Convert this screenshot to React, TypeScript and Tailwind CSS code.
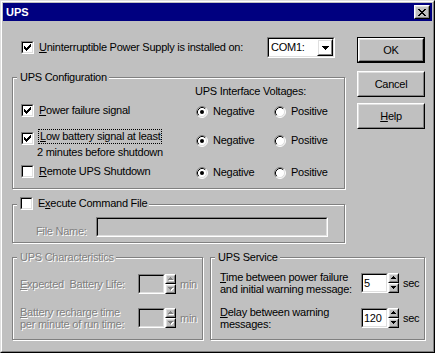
import React from 'react';

const dis = 'text-[#808080] [text-shadow:1px_1px_0_#ffffff]';

type Box = { className?: string; children?: React.ReactNode };

const Raised = ({ className = '', children }: Box) => (
  <div className={`border border-t-white border-l-white border-b-black border-r-black ${className}`}>
    <div className="w-full h-full border border-t-[#dfdfdf] border-l-[#dfdfdf] border-b-[#808080] border-r-[#808080] flex items-center justify-center">
      {children}
    </div>
  </div>
);

const Sunken = ({ className = '', children, bg = 'bg-white' }: Box & { bg?: string }) => (
  <div className={`border border-t-[#808080] border-l-[#808080] border-b-white border-r-white ${className}`}>
    <div className={`w-full h-full border border-t-black border-l-black border-b-[#dfdfdf] border-r-[#dfdfdf] flex items-center ${bg}`}>
      {children}
    </div>
  </div>
);

const Check = ({ on }: { on?: boolean }) => (
  <Sunken className="w-[13px] h-[13px] shrink-0">
    <div className="w-full flex justify-center">
      {on && (
        <svg width="7" height="7" viewBox="0 0 7 7" shapeRendering="crispEdges">
          {[2, 3, 4, 3, 2, 1, 0].map((y, x) => (
            <rect key={x} x={x} y={y} width="1" height="3" fill="#000" />
          ))}
        </svg>
      )}
    </div>
  </Sunken>
);

const Radio = ({ on }: { on?: boolean }) => (
  <svg width="12" height="12" viewBox="0 0 12 12" className="shrink-0">
    <circle cx="6" cy="6" r="5" fill="#fff" />
    <path d="M9.89 2.11 A5.5 5.5 0 0 0 2.11 9.89" stroke="#808080" fill="none" />
    <path d="M2.11 9.89 A5.5 5.5 0 0 0 9.89 2.11" stroke="#fff" fill="none" />
    <path d="M9.18 2.82 A4.5 4.5 0 0 0 2.82 9.18" stroke="#000" fill="none" />
    <path d="M2.82 9.18 A4.5 4.5 0 0 0 9.18 2.82" stroke="#dfdfdf" fill="none" />
    {on && <circle cx="6" cy="6" r="2" fill="#000" />}
  </svg>
);

const Arrow = ({ down, color = '#000', shadow }: { down?: boolean; color?: string; shadow?: boolean }) => {
  const rows = down ? [[0, 5], [1, 3], [2, 1]] : [[2, 1], [1, 3], [0, 5]];
  return (
    <svg width="6" height="4" viewBox="0 0 6 4" shapeRendering="crispEdges">
      {shadow &&
        rows.map(([x, w], y) => <rect key={'s' + y} x={x + 1} y={y + 1} width={w} height="1" fill="#fff" />)}
      {rows.map(([x, w], y) => (
        <rect key={y} x={x} y={y} width={w} height="1" fill={color} />
      ))}
    </svg>
  );
};

const Spin = ({ disabled }: { disabled?: boolean }) => (
  <div className="w-[11px] h-[20px] flex flex-col shrink-0">
    <Raised className="w-full h-[10px]">
      <Arrow color={disabled ? '#808080' : '#000'} shadow={disabled} />
    </Raised>
    <Raised className="w-full h-[10px]">
      <Arrow down color={disabled ? '#808080' : '#000'} shadow={disabled} />
    </Raised>
  </div>
);

const Group = ({
  className = '',
  legend,
  legendClass = 'top-[-7px]',
  children,
}: Box & { legend: React.ReactNode; legendClass?: string }) => (
  <div className={`relative border border-[#808080] shadow-[inset_1px_1px_0_#ffffff,1px_1px_0_#ffffff] ${className}`}>
    <div className={`absolute left-[4px] pl-[3px] pr-[2px] bg-[#c0c0c0] flex items-center leading-[13px] ${legendClass}`}>
      {legend}
    </div>
    {children}
  </div>
);

const VoltRow = ({ className = '' }: { className?: string }) => (
  <div className={`h-[13px] flex items-center ${className}`}>
    <div className="w-[78px] ml-[1px] flex items-center">
      <Radio on />
      <span className="ml-[5px]">Negative</span>
    </div>
    <Radio />
    <span className="ml-[5px]">Positive</span>
  </div>
);

export default function App() {
  return (
    <div className="w-[435px] h-[353px] border border-t-[#dfdfdf] border-l-[#dfdfdf] border-b-black border-r-black [font-family:'Liberation_Sans',Arial,sans-serif] text-[11px] leading-[13px] tracking-[-0.25px] text-black">
      <div className="w-full h-full border border-t-white border-l-white border-b-[#808080] border-r-[#808080] bg-[#c0c0c0] p-[1px] flex flex-col">
        <div className="h-[18px] bg-[#000080] flex items-center pl-[3px] pr-[2px]">
          <span className="text-white font-bold tracking-normal">UPS</span>
          <Raised className="ml-auto w-[16px] h-[14px] bg-[#c0c0c0]">
            <svg width="8" height="7" viewBox="0 0 8 7" shapeRendering="crispEdges">
              {[[0, 6], [1, 5], [2, 4], [3, 3], [2, 4], [1, 5], [0, 6]].map(([a, b], y) =>
                a === b ? (
                  <rect key={y} x={a} y={y} width="2" height="1" fill="#000" />
                ) : (
                  <g key={y}>
                    <rect x={a} y={y} width="2" height="1" fill="#000" />
                    <rect x={b} y={y} width="2" height="1" fill="#000" />
                  </g>
                )
              )}
            </svg>
          </Raised>
        </div>

        <div className="pl-[9px] flex flex-col">
          <div className="flex">
            <div className="w-[333px] flex flex-col">
              <div className="mt-[16px] h-[21px] flex items-center">
                <div className="ml-[9px]">
                  <Check on />
                </div>
                <span className="ml-[5px]">
                  <u>U</u>ninterruptible Power Supply is installed on:
                </span>
                <Sunken className="ml-auto mr-[10px] w-[68px] h-[21px]">
                  <span className="pl-[2px] flex-1">COM1:</span>
                  <Raised className="w-[16px] h-full">
                    <svg width="7" height="4" viewBox="0 0 7 4" shapeRendering="crispEdges">
                      <rect x="0" y="0" width="7" height="1" fill="#000" />
                      <rect x="1" y="1" width="5" height="1" fill="#000" />
                      <rect x="2" y="2" width="3" height="1" fill="#000" />
                      <rect x="3" y="3" width="1" height="1" fill="#000" />
                    </svg>
                  </Raised>
                </Sunken>
              </div>

              <Group className="mt-[19px] h-[112px] flex" legend={<span>UPS Configuration</span>}>
                <div className="w-[182px] pl-[8px] flex flex-col">
                  <div className="mt-[26px] h-[13px] flex items-center">
                    <Check on />
                    <span className="ml-[5px]">
                      <u>P</u>ower failure signal
                    </span>
                  </div>
                  <div className="mt-[15px] h-[13px] flex items-center">
                    <Check on />
                    <span className="ml-[4px] mb-[4px] px-[1px] border border-dotted border-black leading-[13px]">
                      <u>L</u>ow battery signal at least
                    </span>
                  </div>
                  <div className="mt-[1px] ml-[16px]">2 minutes before shutdown</div>
                  <div className="mt-[6px] h-[13px] flex items-center">
                    <Check />
                    <span className="ml-[5px]">
                      <u>R</u>emote UPS Shutdown
                    </span>
                  </div>
                </div>
                <div className="flex flex-col">
                  <div className="mt-[7px]">UPS Interface Voltages:</div>
                  <VoltRow className="mt-[7px]" />
                  <VoltRow className="mt-[16px]" />
                  <VoltRow className="mt-[19px]" />
                </div>
              </Group>

              <Group
                className="mt-[15px] h-[39px]"
                legendClass="top-[-8px]"
                legend={
                  <>
                    <Check />
                    <span className="ml-[5px]">
                      E<u>x</u>ecute Command File
                    </span>
                  </>
                }
              >
                <div className="mt-[12px] h-[20px] flex items-center">
                  <span className={`ml-[23px] w-[60px] mt-[8px] ${dis}`}>File Name:</span>
                  <Sunken className="w-[232px] h-[20px]" bg="bg-[#c0c0c0]" />
                </div>
              </Group>
            </div>

            <div className="ml-[12px] w-[68px] flex flex-col">
              <div className="mt-[16px] h-[26px] border border-black">
                <Raised className="w-full h-full">OK</Raised>
              </div>
              <Raised className="mt-[8px] h-[26px]">Cancel</Raised>
              <Raised className="mt-[6px] h-[26px]">
                <span>
                  <u>H</u>elp
                </span>
              </Raised>
            </div>
          </div>

          <div className="mt-[14px] flex gap-[7px]">
            <Group className="w-[191px] h-[83px]" legend={<span className={dis}>UPS Characteristics</span>}>
              <div className="mt-[16px] h-[20px] flex items-center">
                <span className={`ml-[7px] w-[118px] ${dis}`}>
                  <u>E</u>xpected&nbsp;&nbsp;Battery Life:
                </span>
                <Sunken className="w-[27px] h-[20px]" bg="bg-[#c0c0c0]" />
                <Spin disabled />
                <span className={`ml-[4px] ${dis}`}>min</span>
              </div>
              <div className="mt-[14px] h-[20px] flex items-center">
                <span className={`ml-[7px] w-[118px] leading-[12px] ${dis}`}>
                  <u>B</u>attery recharge time
                  <br />
                  per minute of run time:
                </span>
                <Sunken className="w-[27px] h-[20px]" bg="bg-[#c0c0c0]" />
                <Spin disabled />
                <span className={`ml-[4px] ${dis}`}>min</span>
              </div>
            </Group>

            <Group className="w-[215px] h-[83px]" legend={<span>UPS Service</span>}>
              <div className="mt-[15px] h-[20px] flex items-center">
                <span className="ml-[9px] w-[141px] leading-[12px]">
                  <u>T</u>ime between power failure
                  <br />
                  and initial warning message:
                </span>
                <Sunken className="w-[27px] h-[20px]">
                  <span className="pl-[1px]">5</span>
                </Sunken>
                <Spin />
                <span className="ml-[4px]">sec</span>
              </div>
              <div className="mt-[15px] h-[20px] flex items-center">
                <span className="ml-[9px] w-[141px] leading-[12px]">
                  <u>D</u>elay between warning
                  <br />
                  messages:
                </span>
                <Sunken className="w-[27px] h-[20px]">
                  <span className="pl-[1px]">120</span>
                </Sunken>
                <Spin />
                <span className="ml-[4px]">sec</span>
              </div>
            </Group>
          </div>
        </div>
      </div>
    </div>
  );
}
